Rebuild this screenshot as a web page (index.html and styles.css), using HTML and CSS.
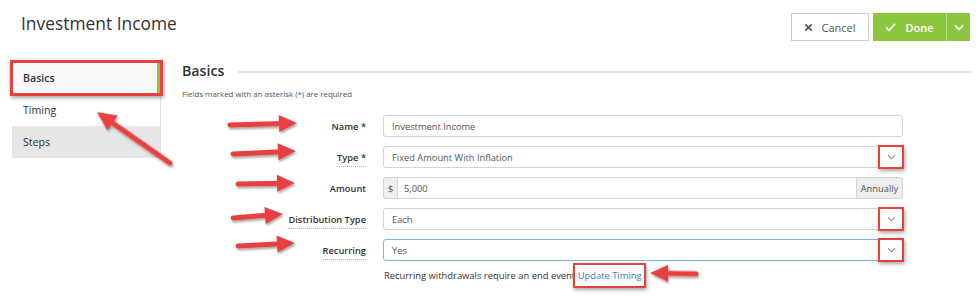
FILE: index.html
```html
<!DOCTYPE html>
<html lang="en">
<head>
    <meta charset="UTF-8">
    <meta name="viewport" content="width=device-width, initial-scale=1.0">
    <title>Investment Income</title>
    <link rel="stylesheet" href="styles.css">
</head>
<body>
<div class="page">
    <header class="topbar">
        <h1 class="title">Investment Income</h1>
        <div class="actions">
            <button class="btn btn-cancel">
                <svg width="9" height="9" viewBox="0 0 10 10" fill="none" stroke="currentColor" stroke-width="1.8">
                    <path d="M1.5 1.5l7 7M8.5 1.5l-7 7"></path>
                </svg>
                Cancel
            </button>
            <div class="split">
                <button class="btn btn-done">
                    <svg width="11" height="10" viewBox="0 0 12 10" fill="none" stroke="currentColor" stroke-width="1.8">
                        <path d="M1 5.2l3.4 3.4L11 1.5"></path>
                    </svg>
                    Done
                </button>
                <button class="btn btn-done btn-caret">
                    <svg width="10" height="7" viewBox="0 0 10 7" fill="none" stroke="currentColor" stroke-width="1.8">
                        <path d="M1 1.5l4 4 4-4"></path>
                    </svg>
                </button>
            </div>
        </div>
    </header>

    <div class="layout">
        <nav class="sidenav">
            <a class="nav-item active marked">Basics</a>
            <a class="nav-item">Timing</a>
            <a class="nav-item muted">Steps</a>
        </nav>

        <main class="content">
            <div class="section-head">
                <h2>Basics</h2>
                <span class="rule"></span>
            </div>
            <p class="note">Fields marked with an asterisk (*) are required</p>

            <div class="form">
                <label class="label">Name *</label>
                <div class="control">
                    <div class="input">Investment Income</div>
                </div>

                <label class="label"><span class="hinted">Type *</span></label>
                <div class="control">
                    <div class="input select">
                        <span class="value">Fixed Amount With Inflation</span>
                        <span class="caret marked">
                            <svg width="9" height="6" viewBox="0 0 10 6" fill="none" stroke="currentColor" stroke-width="1.2"><path d="M1 1l4 4 4-4"></path></svg>
                        </span>
                    </div>
                </div>

                <label class="label">Amount</label>
                <div class="control">
                    <div class="input-group">
                        <span class="addon">$</span>
                        <span class="input grouped">5,000</span>
                        <span class="addon">Annually</span>
                    </div>
                </div>

                <label class="label"><span class="hinted">Distribution Type</span></label>
                <div class="control">
                    <div class="input select">
                        <span class="value">Each</span>
                        <span class="caret marked">
                            <svg width="9" height="6" viewBox="0 0 10 6" fill="none" stroke="currentColor" stroke-width="1.2"><path d="M1 1l4 4 4-4"></path></svg>
                        </span>
                    </div>
                </div>

                <label class="label"><span class="hinted">Recurring</span></label>
                <div class="control">
                    <div class="input select focused">
                        <span class="value">Yes</span>
                        <span class="caret marked">
                            <svg width="9" height="6" viewBox="0 0 10 6" fill="none" stroke="currentColor" stroke-width="1.2"><path d="M1 1l4 4 4-4"></path></svg>
                        </span>
                    </div>
                </div>
            </div>

            <p class="hint">Recurring withdrawals require an end event <a class="link marked">Update Timing</a></p>
        </main>
    </div>

    <!-- annotation arrows drawn over the screenshot -->
    <svg class="arrows" width="976" height="307" viewBox="0 0 976 307">
        <defs>
            <filter id="shadow" x="-20%" y="-50%" width="140%" height="200%">
                <feDropShadow dx="1" dy="2" stdDeviation="1.3" flood-color="#000" flood-opacity="0.35"></feDropShadow>
            </filter>
        </defs>
        <g fill="#e8403f" stroke="#e8403f" filter="url(#shadow)">
            <g transform="translate(297 123) rotate(-1.7)">
                <path d="M-67 0H-14" stroke-width="5" stroke-linecap="round" fill="none"></path>
                <path d="M0 0L-18 -8.5L-18 8.5Z" stroke="none"></path>
            </g>
            <g transform="translate(296 151) rotate(-2.7)">
                <path d="M-63 0H-14" stroke-width="5" stroke-linecap="round" fill="none"></path>
                <path d="M0 0L-18 -8.5L-18 8.5Z" stroke="none"></path>
            </g>
            <g transform="translate(295 183) rotate(-1)">
                <path d="M-57 0H-14" stroke-width="5" stroke-linecap="round" fill="none"></path>
                <path d="M0 0L-18 -8.5L-18 8.5Z" stroke="none"></path>
            </g>
            <g transform="translate(283 214) rotate(-4.5)">
                <path d="M-50 0H-14" stroke-width="5" stroke-linecap="round" fill="none"></path>
                <path d="M0 0L-18 -8.5L-18 8.5Z" stroke="none"></path>
            </g>
            <g transform="translate(295 243) rotate(-3)">
                <path d="M-57 0H-14" stroke-width="5" stroke-linecap="round" fill="none"></path>
                <path d="M0 0L-18 -8.5L-18 8.5Z" stroke="none"></path>
            </g>
            <g transform="translate(650 273) rotate(181)">
                <path d="M-46 0H-14" stroke-width="5" stroke-linecap="round" fill="none"></path>
                <path d="M0 0L-18 -8.5L-18 8.5Z" stroke="none"></path>
            </g>
            <g transform="translate(97 112) rotate(215)">
                <path d="M-89 0H-14" stroke-width="5" stroke-linecap="round" fill="none"></path>
                <path d="M0 0L-19 -9L-19 9Z" stroke="none"></path>
            </g>
        </g>
    </svg>
</div>
</body>
</html>
```

FILE: styles.css
```css
body {
    font-family: 'Open Sans', 'Noto Sans', sans-serif;
    background-color: #fff;
    color: #333;
    margin: 0;
    padding: 0;
}

.page {
    position: relative;
    width: 976px;
    height: 307px;
    overflow: hidden;
}

.topbar {
    display: flex;
    justify-content: space-between;
    align-items: flex-start;
    padding: 10px 6px 0 21px;
}

.title {
    margin: 0;
    font-size: 17.4px;
    line-height: 26px;
    font-weight: 400;
    color: #333;
}

.actions {
    display: flex;
    gap: 4px;
    margin-top: 3px;
}

.btn {
    display: flex;
    align-items: center;
    justify-content: center;
    gap: 8px;
    height: 28px;
    border-radius: 0;
    font-family: inherit;
    font-size: 11px;
    cursor: pointer;
    padding: 0;
}

.btn-cancel {
    width: 78px;
    background: #fff;
    border: 1px solid #ccc;
    color: #555;
}

.split {
    display: flex;
    gap: 1px;
    background: #b6dc8a;
}

.btn-done {
    width: 73px;
    background-color: #8cc63f;
    border: none;
    color: #fff;
    font-weight: 600;
    gap: 9px;
}

.btn-caret {
    width: 23px;
}

.layout {
    display: flex;
    margin-top: 21px;
}

.sidenav {
    width: 148px;
    margin-left: 12px;
    border-right: 1px solid #e4e4e4;
    display: flex;
    flex-direction: column;
    align-self: flex-start;
}

.nav-item {
    position: relative;
    display: block;
    height: 32px;
    line-height: 33px;
    padding-left: 11px;
    font-size: 10.6px;
    color: #333;
}

.nav-item.active {
    background-color: #f9f9f9;
    font-weight: 600;
    box-shadow: inset -3px 0 0 #8cc63f;
}

.nav-item.muted {
    background-color: #e6e6e6;
}

.marked {
    position: relative;
}

.marked::after {
    content: "";
    position: absolute;
    border: 3px solid #e8403f;
    box-shadow: 1px 2px 4px rgba(0, 0, 0, 0.35);
    pointer-events: none;
}

.nav-item.marked::after {
    top: -2px;
    bottom: -2px;
    left: -2px;
    right: -3px;
}

.content {
    flex: 1;
    margin-left: 21px;
    margin-right: 4px;
}

.section-head {
    display: flex;
    align-items: center;
    height: 18px;
}

.section-head h2 {
    margin: 0;
    font-size: 14.2px;
    line-height: 18px;
    font-weight: 600;
    color: #333;
}

.rule {
    flex: 1;
    height: 2px;
    margin-left: 14px;
    margin-top: 2px;
    background-color: #e6e6e6;
}

.note {
    margin: 8px 0 0;
    font-size: 7.9px;
    line-height: 12px;
    color: #555;
}

.form {
    display: grid;
    grid-template-columns: 184px 520px;
    column-gap: 17px;
    row-gap: 9px;
    align-items: center;
    margin-top: 15px;
}

.label {
    text-align: right;
    font-size: 9.3px;
    font-weight: 600;
    color: #333;
}

.hinted {
    border-bottom: 1px dotted #9ccf62;
    padding-bottom: 2px;
}

.input {
    display: flex;
    align-items: center;
    box-sizing: border-box;
    height: 22px;
    padding-left: 8px;
    border: 1px solid #d4d4d4;
    border-radius: 3px;
    font-size: 9.3px;
    color: #555;
}

.select {
    justify-content: space-between;
    padding-right: 0;
}

.select.focused {
    border-color: #7db4e6;
}

.caret {
    display: flex;
    align-items: center;
    justify-content: center;
    width: 22px;
    height: 100%;
    color: #888;
}

.caret.marked::after {
    top: -2px;
    bottom: -2px;
    left: -2px;
    right: -2px;
    border-width: 2.5px;
}

.input-group {
    display: flex;
    height: 22px;
}

.addon {
    display: flex;
    align-items: center;
    box-sizing: border-box;
    padding: 0 4px;
    background-color: #eee;
    border: 1px solid #d4d4d4;
    font-size: 9.3px;
    color: #555;
}

.addon:first-child {
    border-radius: 3px 0 0 3px;
    border-right: none;
    width: 14px;
}

.addon:last-child {
    border-radius: 0 3px 3px 0;
    border-left: none;
    width: 46px;
    justify-content: center;
    padding: 0;
}

.input.grouped {
    flex: 1;
    height: 22px;
    border-radius: 0;
    padding-left: 6px;
}

.hint {
    margin: 8px 0 0 202px;
    font-size: 9.4px;
    line-height: 14px;
    color: #333;
}

.link {
    color: #3a7cc4;
    cursor: pointer;
}

.link.marked::after {
    top: -6px;
    bottom: -6px;
    left: -5px;
    right: -4px;
    border-width: 2.5px;
}

.arrows {
    position: absolute;
    top: 0;
    left: 0;
    pointer-events: none;
}
```
